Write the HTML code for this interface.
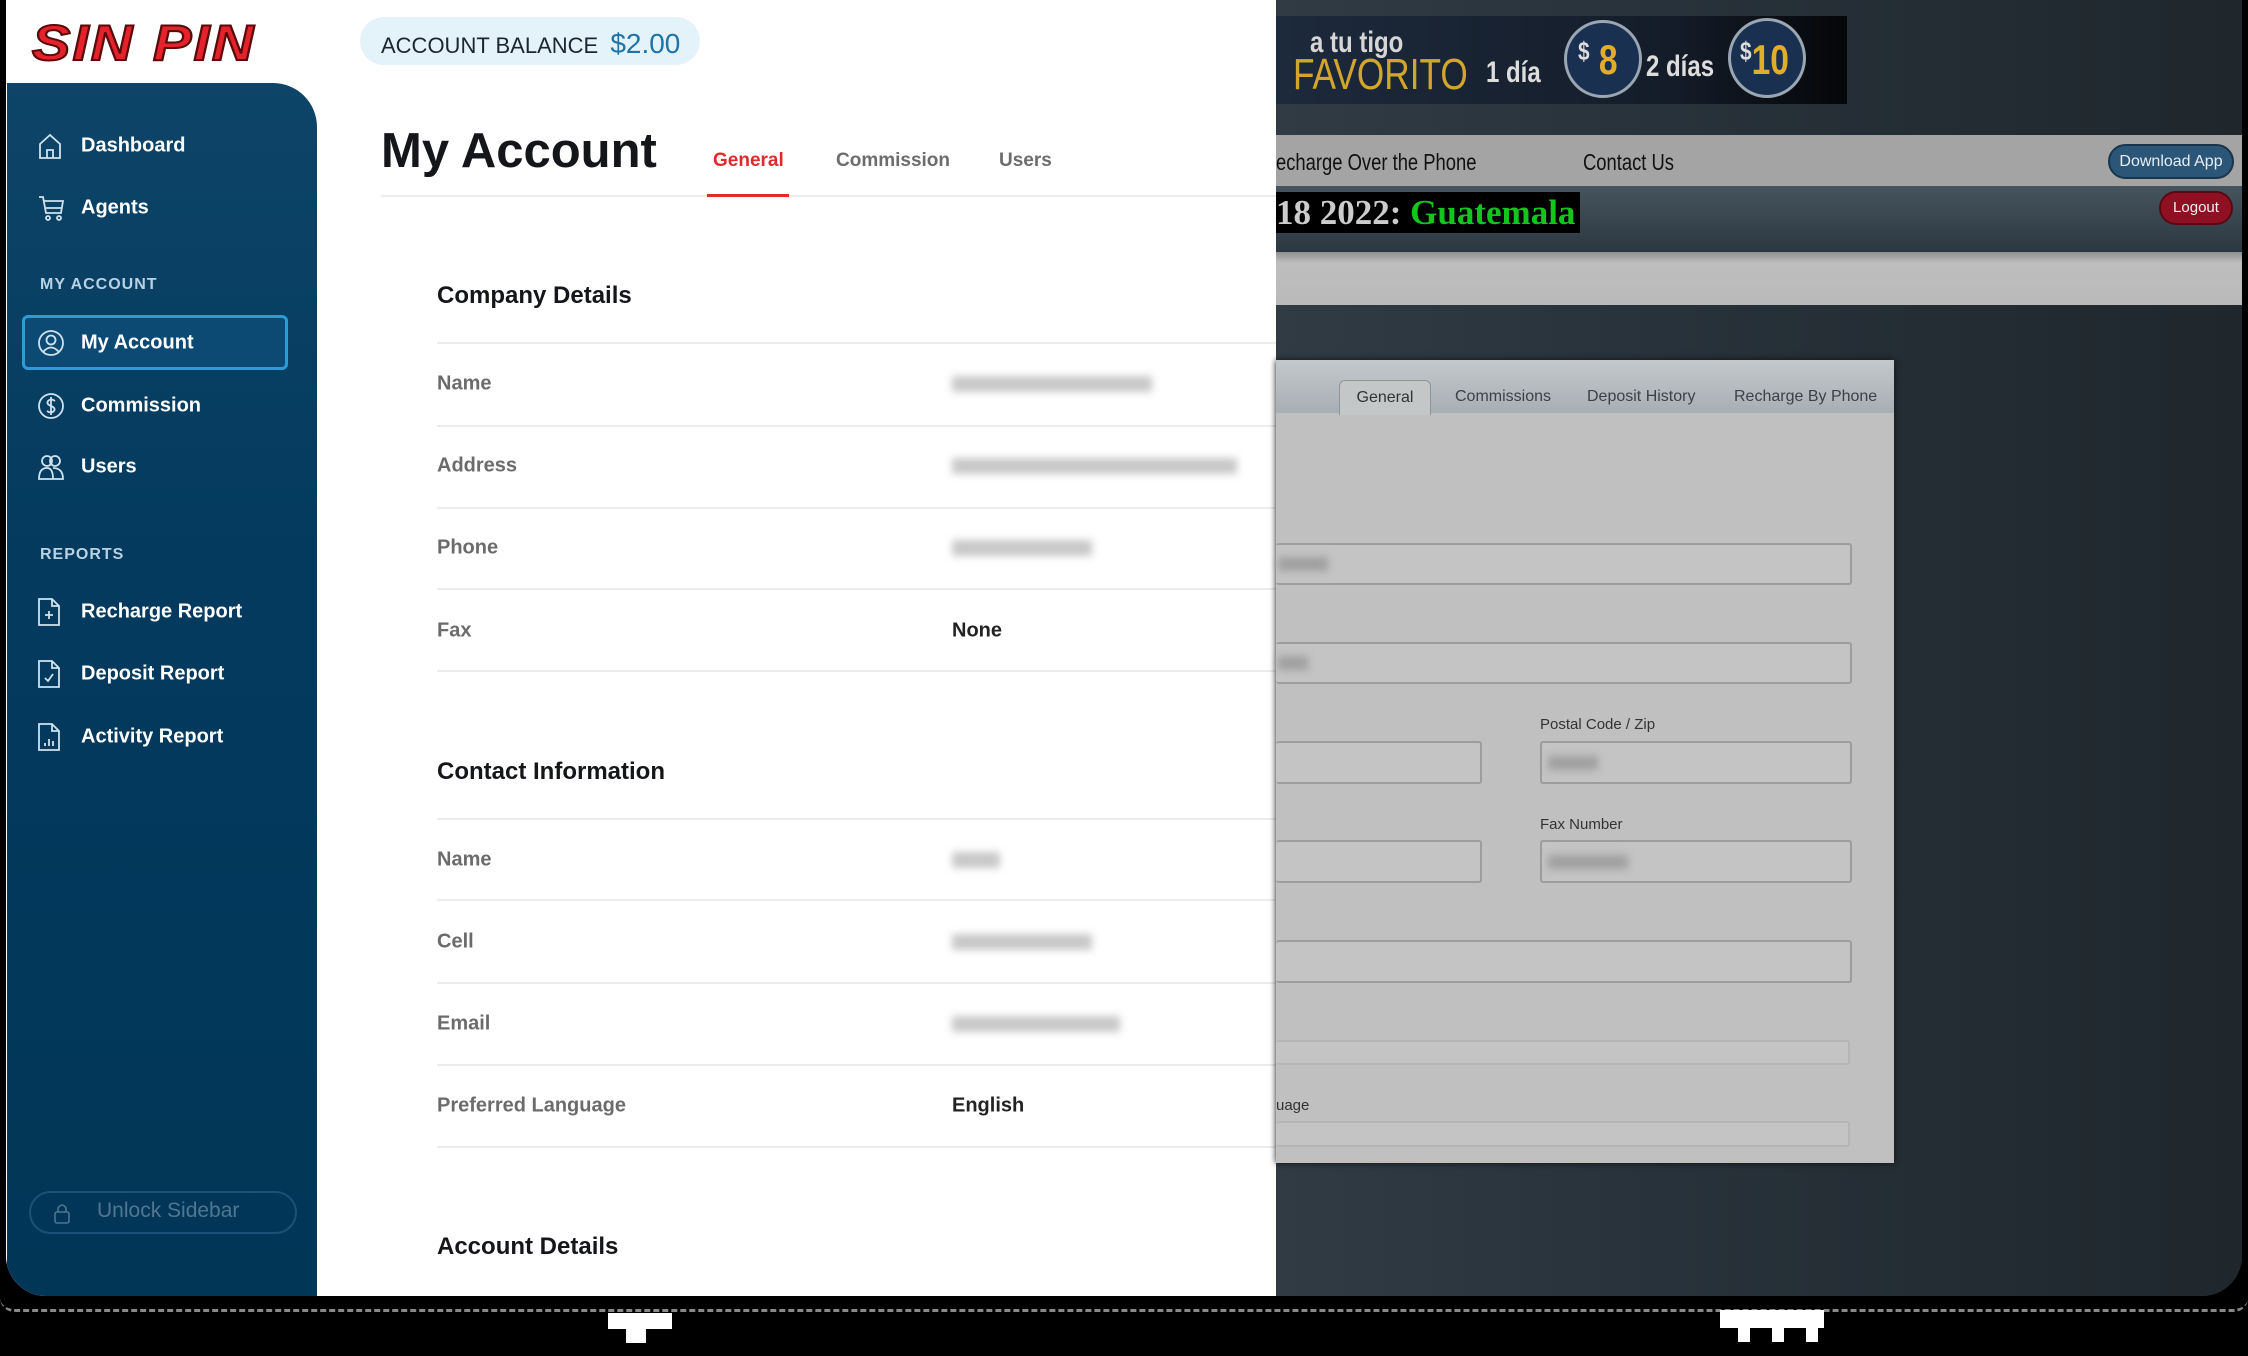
<!DOCTYPE html>
<html><head><meta charset="utf-8"><style>
*{margin:0;padding:0;box-sizing:border-box}
body{width:2248px;height:1356px;background:#000;position:relative;overflow:hidden;font-family:"Liberation Sans",sans-serif}
.abs{position:absolute}
#frame{left:6px;top:0;width:2236px;height:1296px;border-radius:0 0 40px 40px;overflow:hidden;background:#27323a}
#white{left:0;top:0;width:1270px;height:1296px;background:#fff}
#side{left:1px;top:83px;width:310px;height:1213px;background:linear-gradient(180deg,#0d4468,#033a5e 40%,#023657);border-radius:0 44px 0 0}
.nav{position:absolute;left:74px;font-size:20px;font-weight:bold;color:#fff;transform:translateY(-50%)}
.ico{position:absolute;left:30px;transform:translateY(-50%)}
.sec{position:absolute;left:33px;font-size:16px;font-weight:bold;color:#b8d2e4;letter-spacing:1px;transform:translateY(-50%)}
.lab{position:absolute;left:431px;font-size:20px;font-weight:bold;color:#6b6b6b;transform:translateY(-50%)}
.val{position:absolute;left:946px;font-size:20px;font-weight:bold;color:#222;transform:translateY(-50%)}
.blur{position:absolute;left:946px;height:16px;background:#c8c8c8;filter:blur(4px);transform:translateY(-50%)}
.hl{position:absolute;left:431px;width:839px;height:2px;background:#ececec}
.h2{position:absolute;left:431px;font-size:24px;font-weight:bold;color:#14161a;transform:translateY(-50%)}
.inp{position:absolute;background:#c4c4c4;border:2px solid #9d9d9d;border-radius:3px}
.rl{position:absolute;font-size:15px;color:#333}
.nw{transform:scaleX(.8);transform-origin:left;white-space:nowrap}
.bl{position:absolute;height:14px;background:#a0a0a0;filter:blur(4px)}
</style></head><body>
<div id="frame" class="abs">
 <div id="white" class="abs"></div>
 <div class="abs" style="left:26px;top:14px;font-size:50px;font-weight:900;font-style:italic;color:#e3222b;-webkit-text-stroke:2px #5a0a0a;letter-spacing:2px;transform:scaleX(1.15);transform-origin:left">SIN PIN</div>
 <div class="abs" style="left:354px;top:17px;width:340px;height:48px;border-radius:24px;background:#e4f3fa"></div>
 <div class="abs" style="left:375px;top:28px;font-size:22px;color:#1d2630">ACCOUNT BALANCE <span style="color:#1f73a6;font-size:28px;margin-left:6px">$2.00</span></div>
 <div id="side" class="abs">
  <svg class="ico" style="top:63px" width="26" height="28" viewBox="0 0 26 28" fill="none" stroke="#cfe2ef" stroke-width="1.8"><path d="M3 12 L13 3 L23 12 V26 H3 Z M10 26 V18 H16 V26"/></svg>
  <div class="nav" style="top:63px">Dashboard</div>
  <svg class="ico" style="top:125px" width="28" height="28" viewBox="0 0 28 28" fill="none" stroke="#cfe2ef" stroke-width="1.8"><path d="M2 3 H6 L9 19 H24 L26 7 H7 M9 14 H25"/><circle cx="11" cy="24" r="2"/><circle cx="22" cy="24" r="2"/></svg>
  <div class="nav" style="top:125px">Agents</div>
  <div class="sec" style="top:202px">MY ACCOUNT</div>
  <div class="abs" style="left:15px;top:232px;width:266px;height:55px;border:3px solid #2e9bd6;border-radius:6px;background:#0d4a73"></div>
  <svg class="ico" style="top:260px" width="28" height="28" viewBox="0 0 28 28" fill="none" stroke="#cfe2ef" stroke-width="1.8"><circle cx="14" cy="14" r="12"/><circle cx="14" cy="11" r="4.5"/><path d="M6 23 Q14 14 22 23"/></svg>
  <div class="nav" style="top:260px">My Account</div>
  <svg class="ico" style="top:323px" width="28" height="28" viewBox="0 0 28 28" fill="none" stroke="#cfe2ef" stroke-width="1.8"><circle cx="14" cy="14" r="12"/><path d="M18 9 Q14 6 11 9 Q9 12 14 14 Q19 16 17 19 Q14 22 10 19 M14 5 V23"/></svg>
  <div class="nav" style="top:323px">Commission</div>
  <svg class="ico" style="top:384px" width="28" height="28" viewBox="0 0 28 28" fill="none" stroke="#cfe2ef" stroke-width="1.8"><circle cx="10" cy="8" r="5"/><circle cx="18" cy="8" r="5"/><path d="M2 26 Q2 15 10 15 Q16 15 16 26 Z M16 15 Q26 15 26 26 H16"/></svg>
  <div class="nav" style="top:384px">Users</div>
  <div class="sec" style="top:472px">REPORTS</div>
  <svg class="ico" style="top:529px" width="24" height="30" viewBox="0 0 24 30" fill="none" stroke="#cfe2ef" stroke-width="1.8"><path d="M2 2 H15 L22 9 V28 H2 Z M15 2 V9 H22 M12 14 V22 M8 18 H16"/></svg>
  <div class="nav" style="top:529px">Recharge Report</div>
  <svg class="ico" style="top:591px" width="24" height="30" viewBox="0 0 24 30" fill="none" stroke="#cfe2ef" stroke-width="1.8"><path d="M2 2 H15 L22 9 V28 H2 Z M15 2 V9 H22 M8 19 L11 22 L16 15"/></svg>
  <div class="nav" style="top:591px">Deposit Report</div>
  <svg class="ico" style="top:654px" width="24" height="30" viewBox="0 0 24 30" fill="none" stroke="#cfe2ef" stroke-width="1.8"><path d="M2 2 H15 L22 9 V28 H2 Z M15 2 V9 H22 M8 24 V21 M12 24 V17 M16 24 V19"/></svg>
  <div class="nav" style="top:654px">Activity Report</div>
  <div class="abs" style="left:22px;top:1108px;width:268px;height:43px;border:2px solid #1b5176;border-radius:22px"></div>
  <svg class="abs" style="left:46px;top:1118px" width="18" height="24" viewBox="0 0 18 24" fill="none" stroke="#4f7592" stroke-width="1.6"><rect x="2" y="11" width="14" height="11" rx="2"/><path d="M5 11 V7 Q9 1 13 7 V11"/></svg>
  <div class="abs" style="left:90px;top:1116px;font-size:21px;color:#51768f">Unlock Sidebar</div>
 </div>
 <div class="abs" style="left:375px;top:151px;transform:translateY(-50%);font-size:49px;font-weight:bold;color:#14161a">My Account</div>
 <div class="abs" style="left:707px;top:161px;transform:translateY(-50%);font-size:19px;font-weight:bold;color:#de2b2b">General</div>
 <div class="abs" style="left:830px;top:161px;transform:translateY(-50%);font-size:19px;font-weight:bold;color:#6c6c6c">Commission</div>
 <div class="abs" style="left:993px;top:161px;transform:translateY(-50%);font-size:19px;font-weight:bold;color:#6c6c6c">Users</div>
 <div class="abs" style="left:375px;top:195px;width:895px;height:2px;background:#ececec"></div>
 <div class="abs" style="left:701px;top:194px;width:82px;height:3px;background:#de2b2b"></div>
 <div class="h2" style="top:296px">Company Details</div>
 <div class="hl" style="top:342px"></div>
 <div class="lab" style="top:384px">Name</div><div class="blur" style="width:200px;top:384px"></div>
 <div class="hl" style="top:425px"></div>
 <div class="lab" style="top:466px">Address</div><div class="blur" style="width:285px;top:466px"></div>
 <div class="hl" style="top:507px"></div>
 <div class="lab" style="top:548px">Phone</div><div class="blur" style="width:140px;top:548px"></div>
 <div class="hl" style="top:588px"></div>
 <div class="lab" style="top:631px">Fax</div><div class="val" style="top:631px">None</div>
 <div class="hl" style="top:670px"></div>
 <div class="h2" style="top:772px">Contact Information</div>
 <div class="hl" style="top:818px"></div>
 <div class="lab" style="top:860px">Name</div><div class="blur" style="width:48px;top:860px"></div>
 <div class="hl" style="top:899px"></div>
 <div class="lab" style="top:942px">Cell</div><div class="blur" style="width:140px;top:942px"></div>
 <div class="hl" style="top:982px"></div>
 <div class="lab" style="top:1024px">Email</div><div class="blur" style="width:168px;top:1024px"></div>
 <div class="hl" style="top:1064px"></div>
 <div class="lab" style="top:1106px">Preferred Language</div><div class="val" style="top:1106px">English</div>
 <div class="hl" style="top:1146px"></div>
 <div class="h2" style="top:1247px">Account Details</div>

 <div class="abs" style="left:1270px;top:0;width:966px;height:1296px;background:linear-gradient(90deg,#303b44,#28323a 40%,#1f272d)"></div>
 <div class="abs" style="left:1270px;top:16px;width:571px;height:88px;background:linear-gradient(90deg,#1d2a3c,#141c29 70%,#050608)"></div>
 <div class="abs nw" style="left:1304px;top:26px;font-size:30px;font-weight:bold;color:#d6d6d6">a tu tigo</div>
 <div class="abs nw" style="left:1287px;top:50px;font-size:44px;color:#d4a52c">FAVORITO</div>
 <div class="abs nw" style="left:1480px;top:56px;font-size:30px;font-weight:bold;color:#ddd">1 día</div>
 <div class="abs" style="left:1558px;top:20px;width:78px;height:78px;border-radius:50%;background:#1a3050;border:3px solid #9aa6b2"></div>
 <div class="abs nw" style="left:1572px;top:36px;font-size:42px;font-weight:bold;color:#e1ad2a"><span style="color:#ddd;font-size:26px;vertical-align:top">$</span> 8</div>
 <div class="abs nw" style="left:1640px;top:50px;font-size:30px;font-weight:bold;color:#ddd">2 días</div>
 <div class="abs" style="left:1722px;top:18px;width:78px;height:80px;border-radius:50%;background:#1a3050;border:3px solid #9aa6b2"></div>
 <div class="abs nw" style="left:1734px;top:36px;font-size:42px;font-weight:bold;color:#e1ad2a"><span style="color:#ddd;font-size:26px;vertical-align:top">$</span>10</div>
 <div class="abs" style="left:1270px;top:135px;width:966px;height:51px;background:#a4a4a4"></div>
 <div class="abs nw" style="left:1270px;top:149px;font-size:23px;color:#111">echarge Over the Phone</div>
 <div class="abs nw" style="left:1577px;top:149px;font-size:23px;color:#111">Contact Us</div>
 <div class="abs" style="left:2102px;top:144px;width:126px;height:35px;border-radius:18px;background:#2c5677;border:2px solid #17364d;color:#e6eef5;font-size:16px;text-align:center;line-height:31px">Download App</div>
 <div class="abs" style="left:1270px;top:186px;width:966px;height:66px;background:linear-gradient(180deg,#46545e,#2c3840)"></div>
 <div class="abs" style="left:1270px;top:192px;width:304px;height:41px;background:#000;font-family:'Liberation Serif',serif;font-weight:bold;font-size:35px;color:#ccc;line-height:41px;white-space:nowrap;overflow:hidden">18 2022: <span style="color:#13c51d">Guatemala</span></div>
 <div class="abs" style="left:2153px;top:191px;width:74px;height:34px;border-radius:17px;background:#8f1022;border:2px solid #5a0812;color:#eee;font-size:15px;text-align:center;line-height:30px">Logout</div>
 <div class="abs" style="left:1270px;top:252px;width:966px;height:53px;background:linear-gradient(180deg,#8f8f8f,#bdbdbd 20%,#bababa)"></div>
 <div class="abs" style="left:1270px;top:360px;width:618px;height:803px;background:#c0c0c0;box-shadow:0 0 6px #111"></div>
 <div class="abs" style="left:1270px;top:360px;width:618px;height:53px;background:linear-gradient(180deg,#c3c8cb,#a8afb4)"></div>
 <div class="abs" style="left:1333px;top:380px;width:92px;height:35px;background:#c4c7c8;border:1px solid #8d959b;border-bottom:none;border-radius:6px 6px 0 0;font-size:16px;color:#333;text-align:center;line-height:34px">General</div>
 <div class="rl" style="left:1449px;top:388px;font-size:16px;color:#3a4248">Commissions</div>
 <div class="rl" style="left:1581px;top:388px;font-size:16px;color:#3a4248">Deposit History</div>
 <div class="rl" style="left:1728px;top:388px;font-size:16px;color:#3a4248">Recharge By Phone</div>
 <div class="inp" style="left:1270px;top:543px;width:576px;height:42px;border-left:none"></div>
 <div class="bl" style="left:1272px;top:557px;width:50px"></div>
 <div class="inp" style="left:1270px;top:642px;width:576px;height:42px;border-left:none"></div>
 <div class="bl" style="left:1272px;top:656px;width:30px"></div>
 <div class="rl" style="left:1534px;top:716px">Postal Code / Zip</div>
 <div class="inp" style="left:1270px;top:741px;width:206px;height:43px;border-left:none"></div>
 <div class="inp" style="left:1534px;top:741px;width:312px;height:43px"></div>
 <div class="bl" style="left:1542px;top:756px;width:50px"></div>
 <div class="rl" style="left:1534px;top:816px">Fax Number</div>
 <div class="inp" style="left:1270px;top:840px;width:206px;height:43px;border-left:none"></div>
 <div class="inp" style="left:1534px;top:840px;width:312px;height:43px"></div>
 <div class="bl" style="left:1542px;top:855px;width:80px"></div>
 <div class="inp" style="left:1270px;top:940px;width:576px;height:43px;border-left:none"></div>
 <div class="inp" style="left:1270px;top:1040px;width:574px;height:25px;border-left:none;border-color:#b5b5b5"></div>
 <div class="rl" style="left:1270px;top:1097px">uage</div>
 <div class="inp" style="left:1270px;top:1121px;width:574px;height:26px;border-left:none;border-color:#b5b5b5"></div>
</div>
<div class="abs" style="left:0;top:1298px;width:2248px;height:14px;border-bottom:3px dashed #888;border-radius:0 0 40px 40px"></div>
<div class="abs" style="left:608px;top:1313px;width:64px;height:16px;background:#fff"></div>
<div class="abs" style="left:626px;top:1313px;width:20px;height:30px;background:#fff"></div>
<div class="abs" style="left:1720px;top:1310px;width:104px;height:18px;background:#fff"></div>
<div class="abs" style="left:1738px;top:1310px;width:12px;height:32px;background:#fff"></div>
<div class="abs" style="left:1772px;top:1310px;width:12px;height:32px;background:#fff"></div>
<div class="abs" style="left:1806px;top:1310px;width:12px;height:32px;background:#fff"></div>
</body></html>
